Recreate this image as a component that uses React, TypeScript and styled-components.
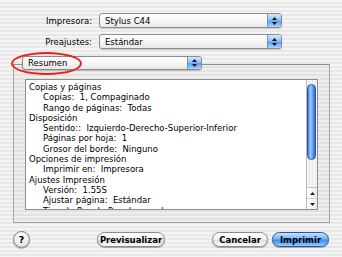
import React from "react";
import styled, { createGlobalStyle } from "styled-components";

const GlobalStyle = createGlobalStyle`
  html, body { margin: 0; padding: 0; }
  body {
    width: 342px;
    height: 257px;
    overflow: hidden;
    background: repeating-linear-gradient(to bottom, #f4f4f4 0px, #f4f4f4 2px, #e8e8e8 2px, #e8e8e8 4px);
    font-family: "DejaVu Sans", "Noto Sans", sans-serif;
  }
`;

const Window = styled.div`
  width: 342px;
  height: 257px;
  box-sizing: border-box;
  padding-top: 13px;
  display: flex;
  flex-direction: column;
  font-size: 8.5px;
  color: #000;
`;

const Form = styled.div`
  display: grid;
  grid-template-columns: 92px 183px;
  column-gap: 7px;
  row-gap: 6px;
  align-items: center;
`;

const Label = styled.span`
  text-align: right;
  font-size: 8.5px;
`;

const PopupBox = styled.div<{ $width: number; $height: number }>`
  width: ${(p) => p.$width}px;
  height: ${(p) => p.$height}px;
  box-sizing: border-box;
  border: 1px solid #8b8b8b;
  border-radius: 3px;
  background: linear-gradient(#ffffff, #f6f6f6 50%, #e8e8e8);
  box-shadow: 0 1px 1px rgba(0, 0, 0, 0.18);
  display: flex;
  align-items: stretch;
  overflow: hidden;
`;

const PopupText = styled.span`
  flex: 1;
  display: flex;
  align-items: center;
  padding-left: 5px;
  font-size: 8.5px;
  white-space: nowrap;
`;

const PopupCap = styled.span`
  width: 13px;
  border-left: 1px solid #6f93c4;
  background: linear-gradient(#d6ebff, #8fc1f7 45%, #5c9ff0 55%, #a9d4ff);
  display: flex;
  align-items: center;
  justify-content: center;
`;

const Arrows = () => (
  <svg width="5" height="8" viewBox="0 0 5 8">
    <path d="M2.5 0 L5 3 L0 3 Z" fill="#111" />
    <path d="M0 5 L5 5 L2.5 8 Z" fill="#111" />
  </svg>
);

const Popup = ({ text, width, height = 15 }: { text: string; width: number; height?: number }) => (
  <PopupBox $width={width} $height={height}>
    <PopupText>{text}</PopupText>
    <PopupCap>
      <Arrows />
    </PopupCap>
  </PopupBox>
);

const Section = styled.div`
  position: relative;
  margin-top: 7px;
  margin-left: 13px;
  width: 317px;
  display: flex;
  flex-direction: column;
`;

const SectionHeader = styled.div`
  position: relative;
  z-index: 2;
  margin-left: 9px;
`;

const Ellipse = styled.div`
  position: absolute;
  z-index: 3;
  left: -2px;
  top: -4px;
  width: 71px;
  height: 23px;
  box-sizing: border-box;
  border: 2px solid #e3231c;
  border-radius: 50%;
  pointer-events: none;
`;

const GroupBox = styled.div`
  margin-top: -6px;
  height: 159px;
  box-sizing: border-box;
  border: 1px solid #a3a3a3;
  border-top-color: #8f8f8f;
  background: rgba(0, 0, 0, 0.025);
  padding: 14px 11px 12px 11px;
  display: flex;
`;

const ListBox = styled.div`
  flex: 1;
  display: flex;
  border: 1px solid #8c8c8c;
  background: #ffffff;
  overflow: hidden;
`;

const ListContent = styled.div`
  flex: 1;
  padding: 2px 0 0 3px;
  overflow: hidden;
`;

const Line = styled.div<{ $indent?: boolean }>`
  height: 10.3px;
  line-height: 10.3px;
  font-size: 8.5px;
  white-space: pre;
  padding-left: ${(p) => (p.$indent ? 14 : 0)}px;
`;

const ScrollBar = styled.div`
  width: 10px;
  border-left: 1px solid #b9b9b9;
  background: repeating-linear-gradient(to right, #f6f6f6 0px, #f6f6f6 2px, #e9e9e9 2px, #e9e9e9 3px);
  display: flex;
  flex-direction: column;
`;

const Thumb = styled.div`
  margin: 4px 0 0 0;
  width: 9px;
  height: 76px;
  box-sizing: border-box;
  border: 1px solid #2554a8;
  border-radius: 5px;
  background: linear-gradient(to right, #3b7ad6, #9ccaf9 35%, #6eaaf2 60%, #2f6acb);
`;

const ScrollArrows = styled.div`
  margin-top: auto;
  display: flex;
  flex-direction: column;
  border-top: 1px solid #c4c4c4;
  background: linear-gradient(to right, #ffffff, #ececec);
`;

const ScrollArrowBtn = styled.div<{ $last?: boolean }>`
  height: 10px;
  display: flex;
  align-items: center;
  justify-content: center;
  border-bottom: ${(p) => (p.$last ? "none" : "1px solid #d4d4d4")};
`;

const Footer = styled.div`
  margin-top: 9px;
  height: 15px;
  display: flex;
  align-items: center;
  padding: 0 13px;
`;

const HelpButton = styled.div`
  width: 17px;
  height: 17px;
  box-sizing: border-box;
  border-radius: 50%;
  border: 1px solid #7e7e7e;
  background: radial-gradient(circle at 50% 30%, #ffffff, #f0f0f0 50%, #cfcfcf);
  box-shadow: 0 1px 1px rgba(0, 0, 0, 0.25);
  display: flex;
  align-items: center;
  justify-content: center;
  font-weight: bold;
  font-size: 9.5px;
`;

const PillButton = styled.button<{ $primary?: boolean; $width: number; $offset?: number }>`
  width: ${(p) => p.$width}px;
  margin-left: ${(p) => p.$offset ?? 0}px;
  height: 15px;
  padding: 0;
  border-radius: 8px;
  font-family: "DejaVu Sans", "Noto Sans", sans-serif;
  font-weight: bold;
  font-size: 8.5px;
  color: #000;
  border: 1px solid ${(p) => (p.$primary ? "#2a56a0" : "#8a8a8a")};
  background: ${(p) =>
    p.$primary
      ? "linear-gradient(#c6e3ff, #74b4f6 45%, #3f8ff0 55%, #92cdff)"
      : "linear-gradient(#ffffff, #f3f3f3 45%, #dedede 55%, #fbfbfb)"};
  box-shadow: 0 1px 1px rgba(0, 0, 0, 0.3);
  white-space: nowrap;
`;

const Spacer = styled.div`
  flex: 1;
`;

const lines: { t: string; i?: boolean }[] = [
  { t: "Copias y páginas" },
  { t: "Copias:  1, Compaginado", i: true },
  { t: "Rango de páginas:  Todas", i: true },
  { t: "Disposición" },
  { t: "Sentido::  Izquierdo-Derecho-Superior-Inferior", i: true },
  { t: "Páginas por hoja:  1", i: true },
  { t: "Grosor del borde:  Ninguno", i: true },
  { t: "Opciones de impresión" },
  { t: "Imprimir en:  Impresora", i: true },
  { t: "Ajustes Impresión" },
  { t: "Versión:  1.55S", i: true },
  { t: "Ajustar página:  Estándar", i: true },
  { t: "Tipo de Papel:  Papel normal", i: true },
];

export default function App() {
  return (
    <>
      <GlobalStyle />
      <Window>
        <Form>
          <Label>Impresora:</Label>
          <Popup text="Stylus C44" width={183} />
          <Label>Preajustes:</Label>
          <Popup text="Estándar" width={183} />
        </Form>
        <Section>
          <SectionHeader>
            <Popup text="Resumen" width={180} height={14} />
          </SectionHeader>
          <Ellipse />
          <GroupBox>
            <ListBox>
              <ListContent>
                {lines.map((l, k) => (
                  <Line key={k} $indent={l.i}>
                    {l.t}
                  </Line>
                ))}
              </ListContent>
              <ScrollBar>
                <Thumb />
                <ScrollArrows>
                  <ScrollArrowBtn>
                    <svg width="5" height="3" viewBox="0 0 5 3">
                      <path d="M2.5 0 L5 3 L0 3 Z" fill="#222" />
                    </svg>
                  </ScrollArrowBtn>
                  <ScrollArrowBtn $last>
                    <svg width="5" height="3" viewBox="0 0 5 3">
                      <path d="M0 0 L5 0 L2.5 3 Z" fill="#222" />
                    </svg>
                  </ScrollArrowBtn>
                </ScrollArrows>
              </ScrollBar>
            </ListBox>
          </GroupBox>
        </Section>
        <Footer>
          <HelpButton>?</HelpButton>
          <PillButton $width={68} $offset={67}>
            Previsualizar
          </PillButton>
          <Spacer />
          <PillButton $width={56}>Cancelar</PillButton>
          <PillButton $width={57} $offset={4} $primary>
            Imprimir
          </PillButton>
        </Footer>
      </Window>
    </>
  );
}
